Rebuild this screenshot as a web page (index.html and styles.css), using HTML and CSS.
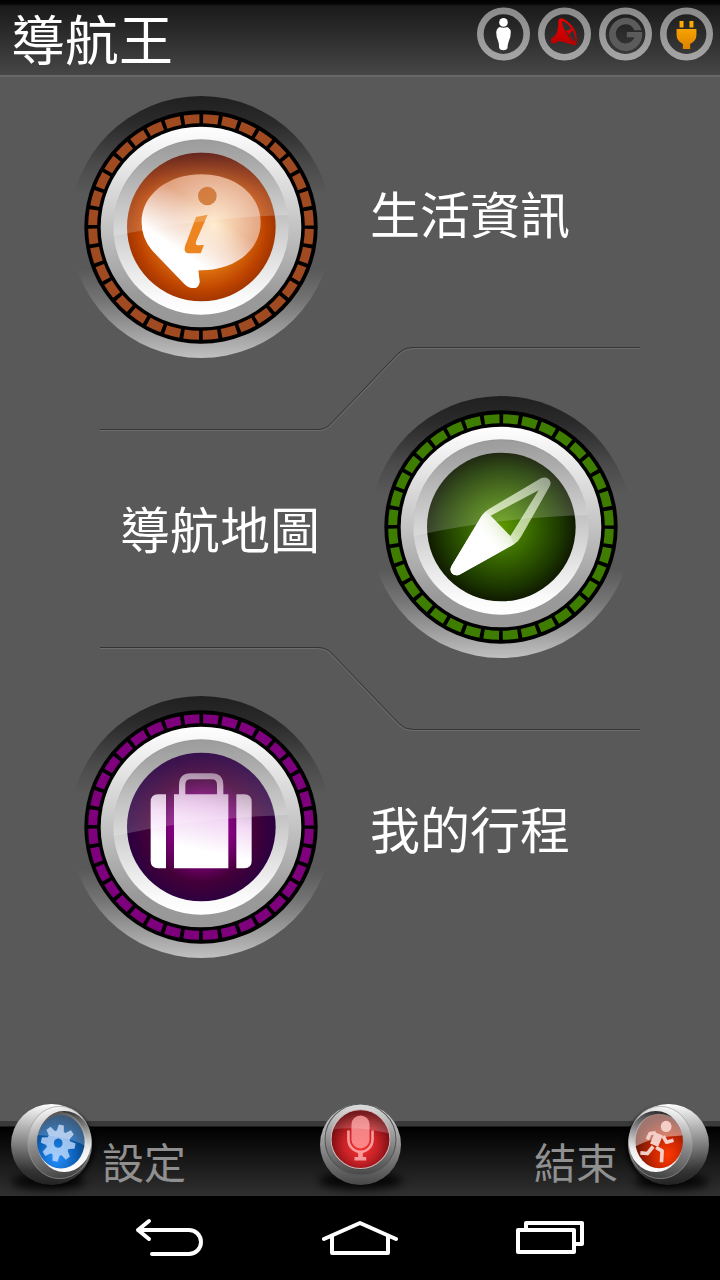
FILE: index.html
```html
<!DOCTYPE html>
<html lang="zh-Hant">
<head>
    <meta charset="UTF-8">
    <meta name="viewport" content="width=device-width, initial-scale=1.0">
    <title>導航王</title>
    <link rel="stylesheet" href="styles.css">
</head>
<body>
    <!-- Shared gradients and button shapes -->
    <svg class="defs" width="0" height="0" aria-hidden="true">
        <defs>
            <linearGradient id="shade" x1="0" y1="0" x2="0" y2="1">
                <stop offset="0" stop-color="#202020"/>
                <stop offset=".1" stop-color="#2a2a2a"/>
                <stop offset=".26" stop-color="#4a4a4a"/>
                <stop offset=".37" stop-color="#595959"/>
                <stop offset=".66" stop-color="#595959"/>
                <stop offset=".78" stop-color="#747474"/>
                <stop offset="1" stop-color="#c0c0c0"/>
            </linearGradient>
            <linearGradient id="ring-out" x1="0" y1="0" x2="0" y2="1">
                <stop offset="0" stop-color="#fff"/>
                <stop offset=".06" stop-color="#f8f8f8"/>
                <stop offset=".85" stop-color="#999"/>
                <stop offset="1" stop-color="#999"/>
            </linearGradient>
            <linearGradient id="ring-in" x1="0" y1="0" x2="0" y2="1">
                <stop offset="0" stop-color="#979797"/>
                <stop offset=".15" stop-color="#a2a2a2"/>
                <stop offset=".9" stop-color="#fafafa"/>
                <stop offset="1" stop-color="#fff"/>
            </linearGradient>
            <linearGradient id="glass" x1="0" y1="0" x2=".3" y2="1">
                <stop offset="0" stop-color="#fff" stop-opacity=".02"/>
                <stop offset="1" stop-color="#fff" stop-opacity=".2"/>
            </linearGradient>
            <radialGradient id="orange" cx=".5" cy=".5" r=".5">
                <stop offset="0" stop-color="#ffa412"/>
                <stop offset=".55" stop-color="#e0760f"/>
                <stop offset=".86" stop-color="#bd4300"/>
                <stop offset="1" stop-color="#a33600"/>
            </radialGradient>
            <linearGradient id="orange-dim" x1="0" y1="0" x2="0" y2="1">
                <stop offset="0" stop-color="#400f18" stop-opacity=".75"/>
                <stop offset=".3" stop-color="#7a2410" stop-opacity=".12"/>
                <stop offset=".5" stop-color="#7a2410" stop-opacity="0"/>
            </linearGradient>
            <radialGradient id="green" cx=".5" cy=".5" r=".5">
                <stop offset="0" stop-color="#5d9900"/>
                <stop offset=".35" stop-color="#3d7000"/>
                <stop offset=".8" stop-color="#1c3800"/>
                <stop offset="1" stop-color="#101a00"/>
            </radialGradient>
            <radialGradient id="purple" cx=".5" cy=".52" r=".5">
                <stop offset="0" stop-color="#b800b0"/>
                <stop offset=".35" stop-color="#8b0088"/>
                <stop offset=".7" stop-color="#430038"/>
                <stop offset="1" stop-color="#2b0040"/>
            </radialGradient>
            <radialGradient id="bubble" gradientUnits="userSpaceOnUse" cx="460" cy="420" r="210">
                <stop offset="0" stop-color="#ffe9c8"/>
                <stop offset=".6" stop-color="#e6ac8a"/>
                <stop offset="1" stop-color="#d98c64"/>
            </radialGradient>
            <linearGradient id="bubble-white" gradientUnits="userSpaceOnUse" x1="330" y1="520" x2="430" y2="370">
                <stop offset="0" stop-color="#fff"/>
                <stop offset=".2" stop-color="#fff"/>
                <stop offset="1" stop-color="#fff" stop-opacity="0"/>
            </linearGradient>
            <linearGradient id="needle" gradientUnits="userSpaceOnUse" x1="350" y1="430" x2="540" y2="270">
                <stop offset="0" stop-color="#fff"/>
                <stop offset=".35" stop-color="#dcecc0" stop-opacity=".85"/>
                <stop offset="1" stop-color="#fff" stop-opacity=".5"/>
            </linearGradient>
            <linearGradient id="needle-fill" gradientUnits="userSpaceOnUse" x1="365" y1="475" x2="460" y2="400">
                <stop offset="0" stop-color="#fff"/>
                <stop offset="1" stop-color="#fff" stop-opacity="0"/>
            </linearGradient>
            <linearGradient id="bag" gradientUnits="userSpaceOnUse" x1="390" y1="490" x2="435" y2="262">
                <stop offset="0" stop-color="#fff"/>
                <stop offset=".4" stop-color="#f3daf5"/>
                <stop offset="1" stop-color="#fff" stop-opacity=".5"/>
            </linearGradient>

            <!-- Bezel of the large dials -->
            <symbol id="bezel" viewBox="28 32 786 786">
                <circle cx="421" cy="425" r="393" fill="url(#shade)"/>
                <circle cx="421" cy="425" r="350" fill="#000"/>
                <circle class="ticks" cx="421" cy="425" r="325" pathLength="360"/>
                <circle cx="421" cy="425" r="301" fill="url(#ring-out)"/>
                <circle cx="421" cy="425" r="263" fill="url(#ring-in)"/>
            </symbol>
            <symbol id="gloss" viewBox="28 32 786 786">
                <path d="M160 452A263 263 0 0 1 682 389Q400 398 160 452Z" fill="url(#glass)"/>
            </symbol>

            <!-- Tilted ball of the toolbar -->
            <filter id="blur" x="-30%" y="-60%" width="160%" height="220%"><feGaussianBlur stdDeviation="12"/></filter>
            <filter id="blur-small" x="-30%" y="-30%" width="160%" height="160%"><feGaussianBlur stdDeviation="6"/></filter>
            <linearGradient id="ball" x1=".55" y1="0" x2=".45" y2="1">
                <stop offset="0" stop-color="#fff"/>
                <stop offset=".15" stop-color="#ddd"/>
                <stop offset=".5" stop-color="#888"/>
                <stop offset=".85" stop-color="#333"/>
                <stop offset="1" stop-color="#222"/>
            </linearGradient>
            <linearGradient id="ball-face" x1=".3" y1="0" x2=".5" y2="1">
                <stop offset="0" stop-color="#fff"/>
                <stop offset=".5" stop-color="#8c8c8c"/>
                <stop offset="1" stop-color="#444"/>
            </linearGradient>
            <linearGradient id="ball-rim" x1=".3" y1="0" x2=".6" y2="1">
                <stop offset="0" stop-color="#222"/>
                <stop offset=".35" stop-color="#777"/>
                <stop offset=".75" stop-color="#eee"/>
                <stop offset="1" stop-color="#fff"/>
            </linearGradient>
            <linearGradient id="ball-front" x1="0" y1="0" x2="0" y2="1">
                <stop offset="0" stop-color="#ddd"/>
                <stop offset=".45" stop-color="#999"/>
                <stop offset="1" stop-color="#484848"/>
            </linearGradient>
            <radialGradient id="blue" cx=".4" cy=".8" r=".85">
                <stop offset="0" stop-color="#2490ff"/>
                <stop offset=".5" stop-color="#0c5fb5"/>
                <stop offset="1" stop-color="#0a2b4c"/>
            </radialGradient>
            <radialGradient id="fire" cx=".67" cy=".75" r=".7">
                <stop offset="0" stop-color="#ff3a00"/>
                <stop offset=".45" stop-color="#c82600"/>
                <stop offset="1" stop-color="#601408"/>
            </radialGradient>
            <radialGradient id="red" cx=".5" cy=".6" r=".55">
                <stop offset="0" stop-color="#f33"/>
                <stop offset=".55" stop-color="#c32026"/>
                <stop offset="1" stop-color="#6c0b0e"/>
            </radialGradient>
            <g id="side-ball">
                <ellipse cx="145" cy="272" rx="110" ry="26" fill="#000" opacity=".8" filter="url(#blur)"/>
                <circle cx="165" cy="168" r="118" fill="#000" opacity=".7" filter="url(#blur-small)"/>
                <circle cx="154" cy="162" r="121" fill="url(#ball)"/>
                <ellipse cx="178" cy="156" rx="95" ry="108" fill="url(#ball-face)" stroke="#999" stroke-width="2"/>
                <ellipse cx="192" cy="153" rx="81" ry="91" fill="url(#ball-rim)"/>
            </g>
            <linearGradient id="status-ring" x1="0" y1="0" x2="0" y2="1">
                <stop offset="0" stop-color="#8b8b8b"/>
                <stop offset="1" stop-color="#a4a4a4"/>
            </linearGradient>
            <linearGradient id="dish" x1="0" y1="0" x2="0" y2="1">
                <stop offset="0" stop-color="#f00000"/>
                <stop offset="1" stop-color="#b40000"/>
            </linearGradient>
            <linearGradient id="plug" x1="0" y1="0" x2="0" y2="1">
                <stop offset="0" stop-color="#ffb000"/>
                <stop offset="1" stop-color="#de8200"/>
            </linearGradient>
        </defs>
    </svg>

    <!-- Title bar -->
    <header class="top-bar">
        <h1>導航王</h1>
        <div class="status">
            <svg viewBox="23 21 160 162" role="img" aria-label="行人">
                <circle cx="103" cy="102" r="70" fill="none" stroke="url(#status-ring)" stroke-width="20"/>
                <circle cx="103" cy="67" r="13" fill="#fff"/>
                <path d="M92 81Q103 85 114 81Q125 86 125 97Q125 114 119 124Q115 135 115 145Q112 151 103 151Q93 151 90 145Q90 132 87 124Q81 112 81 97Q82 85 92 81Z" fill="#fff"/>
            </svg>
            <svg viewBox="205 21 160 162" role="img" aria-label="衛星定位">
                <circle cx="285" cy="102" r="70" fill="none" stroke="url(#status-ring)" stroke-width="20"/>
                <path d="M267 59Q273 51 282 57Q304 67 319 96Q325 116 321 134Q317 138 304 133L281 126L264 124Q260 132 250 131Q243 129 243 121Q245 112 255 109Q264 97 266 79Z" fill="url(#dish)"/>
                <path d="M277 62Q297 68 311 94Q320 112 317 128Q306 122 292 102Q278 80 277 62Z" fill="#303030"/>
                <path d="M288 94L315 83L299 103Z" fill="#e00000"/>
                <path d="M297 101L317 128" stroke="#c80000" stroke-width="3"/>
            </svg>
            <svg viewBox="387 21 160 162" role="img" aria-label="G">
                <circle cx="467" cy="102" r="70" fill="none" stroke="url(#status-ring)" stroke-width="20"/>
                <path d="M516 91A50 50 0 1 0 517 96H471V112H494A29 29 0 1 1 494 91Z" fill="#5b5b5b"/>
            </svg>
            <svg viewBox="568 21 160 162" role="img" aria-label="電源">
                <circle cx="648" cy="102" r="70" fill="none" stroke="url(#status-ring)" stroke-width="20"/>
                <path d="M627 63H639V82H627ZM657 63H669V82H657ZM618 87H678V105Q678 123 659 132V147H637V132Q618 123 618 105Z" fill="url(#plug)"/>
            </svg>
        </div>
    </header>

    <!-- Main menu -->
    <main class="content">
        <div class="menu">
            <button type="button" class="menu-item info">
                <svg class="dial" viewBox="28 32 786 786" aria-hidden="true">
                    <use href="#bezel" x="28" y="32" width="786" height="786"/>
                    <circle cx="422" cy="425" r="223" fill="url(#orange)"/>
                    <circle cx="422" cy="425" r="223" fill="url(#orange-dim)"/>
                    <path d="M422 267C522 267 600 328 600 411C600 496 520 557 413 555L417 590Q414 609 398 608Q384 609 372 597L274 495Q243 458 243 411C243 328 322 267 422 267Z" fill="url(#bubble)"/>
                    <path d="M422 267C522 267 600 328 600 411C600 496 520 557 413 555L417 590Q414 609 398 608Q384 609 372 597L274 495Q243 458 243 411C243 328 322 267 422 267Z" fill="url(#bubble-white)"/>
                    <circle cx="440" cy="332" r="28" fill="#cc6a22"/>
                    <path d="M406 395L441 388L407 466Q402 479 411 480L430 479L420 504H383Q370 503 372 488Q373 479 378 470Z" fill="#ec8520"/>
                    <use href="#gloss" x="28" y="32" width="786" height="786"/>
                </svg>
                <span class="label">生活資訊</span>
            </button>

            <svg class="divider" viewBox="0 -.5 540 84" aria-hidden="true">
                <path d="M0 84H218Q226 84 231 79L299 8Q305 2 313 2H540" class="line-light"/>
                <path d="M0 83H217Q225 83 230 78L298 7Q304 1 312 1H540" class="line-dark"/>
            </svg>

            <button type="button" class="menu-item map">
                <span class="label">導航地圖</span>
                <svg class="dial" viewBox="28 32 786 786" aria-hidden="true">
                    <use href="#bezel" x="28" y="32" width="786" height="786"/>
                    <circle cx="422" cy="425" r="223" fill="url(#green)"/>
                    <path fill-rule="evenodd" d="M385 371L542 278Q557 273 566 283Q573 292 567 303L482 453Q475 467 460 477L296 568Q282 574 273 563Q266 553 273 541L355 405Q365 384 385 371ZM390 391L449 452L534 315Z" fill="url(#needle)"/>
                    <path d="M390 391L449 452L460 477L296 568Q282 574 273 563Q266 553 273 541L355 405Q364 388 375 378Z" fill="url(#needle-fill)"/>
                    <use href="#gloss" x="28" y="32" width="786" height="786"/>
                </svg>
            </button>

            <svg class="divider" viewBox="0 -.5 540 84" aria-hidden="true">
                <path d="M0 2H217Q225 2 230 7L298 78Q304 84 312 84H540" class="line-light"/>
                <path d="M0 1H218Q226 1 231 6L299 77Q305 83 313 83H540" class="line-dark"/>
            </svg>

            <button type="button" class="menu-item trip">
                <svg class="dial" viewBox="28 32 786 786" aria-hidden="true">
                    <use href="#bezel" x="28" y="32" width="786" height="786"/>
                    <circle cx="422" cy="425" r="223" fill="url(#purple)"/>
                    <path d="M316 327V549H292Q270 549 270 527V350Q270 327 292 327ZM527 327H551Q573 327 573 350V527Q573 549 551 549H527ZM340 327H355V300Q355 264 390 264H453Q488 264 488 300V327H503V549H340ZM374 327H469V298Q469 282 453 282H390Q374 282 374 298Z" fill-rule="evenodd" fill="url(#bag)"/>
                    <use href="#gloss" x="28" y="32" width="786" height="786"/>
                </svg>
                <span class="label">我的行程</span>
            </button>
        </div>
    </main>

    <!-- Toolbar -->
    <footer class="toolbar">
        <button type="button" class="tool">
            <svg class="ball" viewBox="33 41 242 242" aria-hidden="true">
                <use href="#side-ball"/>
                <ellipse cx="182" cy="154" rx="71" ry="80" fill="url(#blue)"/>
                <g transform="translate(174 158) rotate(10) scale(.93 1)" opacity=".72" fill="#d5e6ff">
                    <path fill-rule="evenodd" d="M0 -38A38 38 0 1 1 0 38A38 38 0 1 1 0 -38ZM0 -14A14 14 0 1 0 0 14A14 14 0 1 0 0 -14Z"/>
                    <path id="tooth" d="M-12 -34L-8 -55H8L12 -34Z"/>
                    <use href="#tooth" transform="rotate(45)"/>
                    <use href="#tooth" transform="rotate(90)"/>
                    <use href="#tooth" transform="rotate(135)"/>
                    <use href="#tooth" transform="rotate(180)"/>
                    <use href="#tooth" transform="rotate(225)"/>
                    <use href="#tooth" transform="rotate(270)"/>
                    <use href="#tooth" transform="rotate(315)"/>
                </g>
                <path d="M112 134A71 80 0 0 1 185 65Q250 72 264 172Q210 135 112 134Z" fill="#fff" opacity=".2"/>
            </svg>
            <span>設定</span>
        </button>

        <button type="button" class="tool" aria-label="語音">
            <svg class="ball" viewBox="240 41 242 242" aria-hidden="true">
                <ellipse cx="361" cy="270" rx="125" ry="26" fill="#000" opacity=".85" filter="url(#blur)"/>
                <circle cx="361" cy="162" r="121" fill="url(#ball-front)"/>
                <circle cx="361" cy="147" r="106" fill="url(#ball-front)" stroke="#555" stroke-width="3"/>
                <circle cx="361" cy="145" r="93" fill="url(#ball-front)"/>
                <circle cx="361" cy="146" r="88" fill="url(#red)" stroke="#d0b8b8" stroke-width="3"/>
                <g opacity=".8">
                    <rect x="334" y="75" width="54" height="99" rx="27" fill="#ff9c9c"/>
                    <path d="M325 120V146A36 38 0 0 0 397 146V120" fill="none" stroke="#ffb5b5" stroke-width="8"/>
                    <path d="M354 182H368V199H378V210H343V199H354Z" fill="#ffb5b5"/>
                </g>
                <path d="M276 117Q294 61 361 59Q433 63 447 129Q355 106 276 117Z" fill="url(#glass)"/>
            </svg>
        </button>

        <button type="button" class="tool tool-end">
            <span>結束</span>
            <svg class="ball" viewBox="444 41 242 242" aria-hidden="true">
                <use href="#side-ball" transform="translate(719 0) scale(-1 1)"/>
                <ellipse cx="537" cy="152" rx="71" ry="81" fill="url(#fire)"/>
                <path d="M465 168V140Q475 75 535 70Q598 72 607 135Q520 138 465 168Z" fill="#fff" opacity=".42"/>
                <g fill="none" stroke="#f3cfc8" stroke-width="11" stroke-linejoin="round">
                    <ellipse cx="558" cy="108" rx="16" ry="17" fill="#f3cfc8" stroke="none"/>
                    <path d="M527 127L510 129L502 147M549 137L559 155L580 149"/>
                    <path d="M536 130L522 164" stroke-width="26"/>
                    <path d="M519 168L502 189L481 187M528 171L546 181L544 215"/>
                </g>
            </svg>
        </button>
    </footer>

    <!-- System keys -->
    <nav class="system-nav">
        <button type="button" aria-label="返回">
            <svg width="70" height="40" viewBox="0 0 70 40">
                <path d="M3 12H54A12 12 0 0 1 54 36H17M14 3L3 12L14 21"/>
            </svg>
        </button>
        <button type="button" aria-label="主畫面">
            <svg width="76" height="40" viewBox="0 0 76 40">
                <path d="M2 21L38 5L74 21M10 18V35H66V18"/>
            </svg>
        </button>
        <button type="button" aria-label="最近使用">
            <svg width="70" height="40" viewBox="0 0 70 40">
                <path d="M3 12H59V34H3ZM11 11V5H67V26H60"/>
            </svg>
        </button>
    </nav>
</body>
</html>
```

FILE: styles.css
```css
* {
    margin: 0;
    padding: 0;
    box-sizing: border-box;
}

body {
    font-family: "Noto Sans CJK TC", sans-serif;
    background: #595959;
    color: #fff;
    display: flex;
    flex-direction: column;
    min-height: 100vh;
}

button {
    background: none;
    border: none;
    color: inherit;
    font: inherit;
    cursor: pointer;
}

svg {
    display: block;
    flex-shrink: 0;
}

.defs {
    position: absolute;
}

/* Title bar */
.top-bar {
    display: flex;
    justify-content: space-between;
    align-items: flex-start;
    height: 77px;
    padding: 0 7px 0 11px;
    background: linear-gradient(#000 0, #060606 4px, #1a1a1a 6px, #464646 75px);
    border-bottom: 2px solid #686868;
}

.top-bar h1 {
    font-size: 54px;
    font-weight: 400;
    line-height: 76px;
}

.status {
    display: flex;
    gap: 8px;
    padding-top: 7px;
}

.status svg {
    width: 53px;
    height: 54px;
}

/* Main menu */
.content {
    flex: 1;
    padding: 19px 18px 40px 0;
}

.menu {
    display: flex;
    flex-direction: column;
    max-width: 600px;
    margin: 0 auto;
}

.menu-item {
    display: grid;
    grid-template-columns: 1fr 1fr;
    align-items: center;
    width: 100%;
    text-align: left;
}

.dial {
    width: 262px;
    height: 262px;
    justify-self: center;
}

.ticks {
    fill: none;
    stroke: currentColor;
    stroke-width: 27;
    stroke-dasharray: 8 2;
    stroke-dashoffset: -1;
}

.info .dial {
    color: #9f4a21;
}

.map .dial {
    color: #3f7d00;
}

.trip .dial {
    color: #7f007c;
}

.label {
    font-size: 50px;
    line-height: 60px;
    padding: 0 31px 0 19px;
}

.info .label {
    padding-bottom: 30px;
}

.map .label {
    text-align: right;
}

.divider {
    width: 90%;
    margin: -12px 11px -34px auto;
    overflow: visible;
    pointer-events: none;
}

.line-dark,
.line-light {
    fill: none;
    stroke: #353535;
}

.line-light {
    stroke: #6d6d6d;
}

/* Toolbar */
.toolbar {
    display: grid;
    grid-template-columns: 1fr auto 1fr;
    align-content: end;
    height: 75px;
    padding: 0 11px 11px;
    background: linear-gradient(#3a3a3a 5px, #000 6px, #303030);
}

.tool {
    display: flex;
    align-items: flex-end;
    gap: 10px;
    color: #909090;
    font-size: 42px;
    line-height: 48px;
}

.tool-end {
    justify-content: flex-end;
}

.ball {
    width: 81px;
    height: 81px;
    overflow: visible;
}

/* System keys */
.system-nav {
    display: flex;
    justify-content: center;
    height: 84px;
    background: #000;
}

.system-nav button {
    display: flex;
    justify-content: center;
    align-items: center;
    width: 190px;
}

.system-nav path {
    fill: none;
    stroke: #fff;
    stroke-width: 4;
    stroke-linecap: round;
    stroke-linejoin: round;
}
```
